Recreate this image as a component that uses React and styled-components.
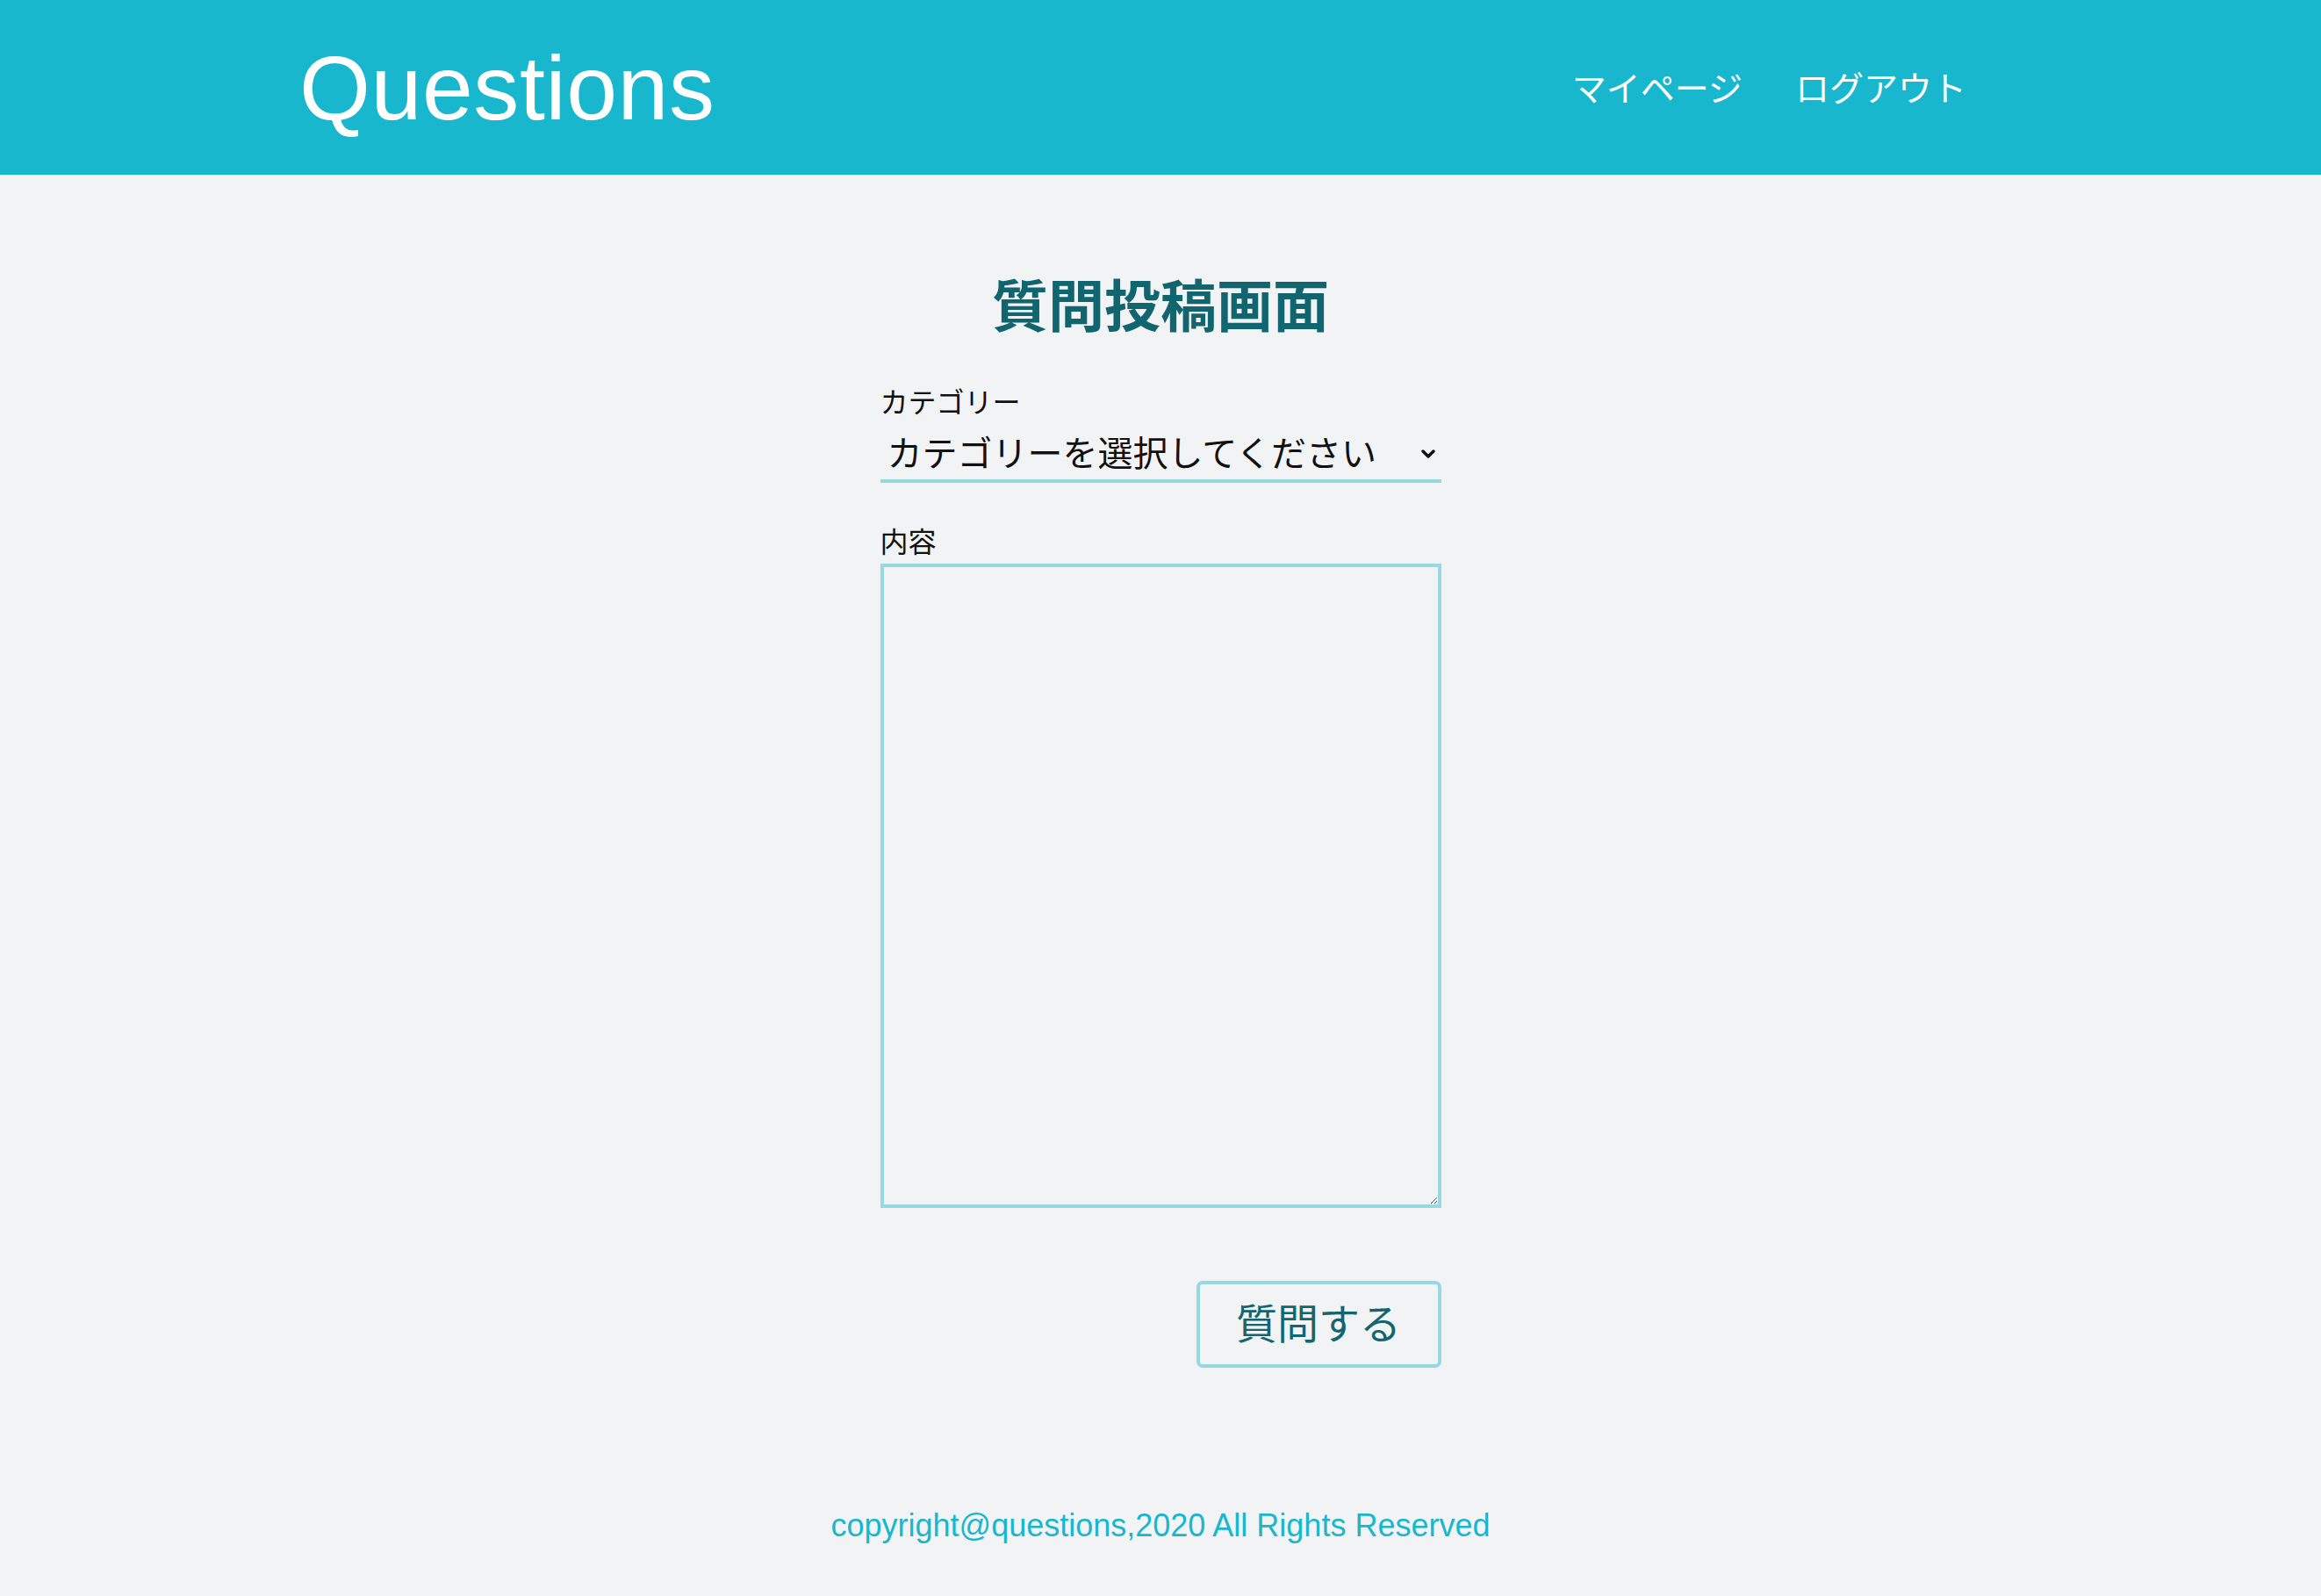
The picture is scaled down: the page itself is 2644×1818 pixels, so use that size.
import React from 'react';
import styled, { createGlobalStyle } from 'styled-components';

const GlobalStyle = createGlobalStyle`
  html, body {
    margin: 0;
    padding: 0;
    background: #f2f3f5;
  }
  body {
    font-family: "Noto Sans CJK JP", "Liberation Sans", sans-serif;
  }
`;

const Header = styled.header`
  height: 199px;
  background: #19b7ce;
  display: flex;
  align-items: center;
  justify-content: space-between;
  padding: 0 404px 0 341px;
  box-sizing: border-box;
`;

const Logo = styled.h1`
  margin: 0;
  font-family: "Liberation Sans", "Noto Sans", sans-serif;
  font-weight: 400;
  font-size: 104px;
  line-height: 1;
  color: #ffffff;
  letter-spacing: 0.6px;
`;

const Nav = styled.nav`
  display: flex;
  gap: 60px;
  margin-bottom: 3px;
`;

const NavLink = styled.a`
  font-family: "Noto Sans CJK JP", sans-serif;
  font-size: 39px;
  line-height: 1;
  color: #ffffff;
  text-decoration: none;
  cursor: pointer;
`;

const Main = styled.main`
  display: flex;
  flex-direction: column;
  align-items: center;
`;

const Title = styled.h2`
  margin: 113px 0 0;
  font-family: "Noto Sans CJK JP", sans-serif;
  font-weight: 700;
  font-size: 64px;
  line-height: 1;
  color: #10656f;
`;

const Form = styled.form`
  width: 639px;
  display: flex;
  flex-direction: column;
  margin-top: 64px;
`;

const Label = styled.label`
  font-family: "Noto Sans CJK JP", sans-serif;
  font-size: 32px;
  line-height: 1;
  color: #111;
  margin-top: ${p => p.$top || 0}px;
`;

const SelectWrap = styled.div`
  position: relative;
  margin-top: 4px;
`;

const Select = styled.select`
  appearance: none;
  width: 100%;
  height: 74px;
  border: none;
  border-bottom: 4px solid #98d8e2;
  background: transparent;
  padding: 6px 0 0 8px;
  font-family: "Noto Sans CJK JP", sans-serif;
  font-size: 40px;
  color: #111;
  outline: none;
`;

const Chevron = styled.svg`
  position: absolute;
  right: 6px;
  top: 35px;
  pointer-events: none;
`;

const TextArea = styled.textarea`
  margin-top: 11px;
  width: 100%;
  height: 734px;
  box-sizing: border-box;
  border: 4px solid #98d8e2;
  background: transparent;
  font-family: "Noto Sans CJK JP", sans-serif;
  font-size: 32px;
  outline: none;
`;

const ButtonRow = styled.div`
  display: flex;
  justify-content: flex-end;
  margin-top: 83px;
`;

const SubmitButton = styled.button`
  width: 279px;
  height: 99px;
  box-sizing: border-box;
  border: 4px solid #98d8e2;
  border-radius: 7px;
  background: transparent;
  font-family: "Noto Sans CJK JP", sans-serif;
  font-size: 47px;
  line-height: 1;
  color: #13666f;
  cursor: pointer;
  padding: 0 0 8px;
`;

const Footer = styled.footer`
  margin-top: 160px;
  padding-bottom: 61px;
  text-align: center;
  font-family: "Liberation Sans", "Noto Sans", sans-serif;
  font-size: 36px;
  line-height: 40px;
  color: #19b7ce;
`;

const App = () => {
  return (
    <>
      <GlobalStyle />
      <Header>
        <Logo>Questions</Logo>
        <Nav>
          <NavLink>マイページ</NavLink>
          <NavLink>ログアウト</NavLink>
        </Nav>
      </Header>
      <Main>
        <Title>質問投稿画面</Title>
        <Form onSubmit={e => e.preventDefault()}>
          <Label htmlFor="category">カテゴリー</Label>
          <SelectWrap>
            <Select id="category" defaultValue="">
              <option value="">カテゴリーを選択してください</option>
            </Select>
            <Chevron width="18" height="12" viewBox="0 0 18 12">
              <polyline points="3,3 9,9 15,3" fill="none" stroke="#111" strokeWidth="3.5" strokeLinecap="round" strokeLinejoin="round" />
            </Chevron>
          </SelectWrap>
          <Label htmlFor="body" $top={49}>内容</Label>
          <TextArea id="body" />
          <ButtonRow>
            <SubmitButton type="submit">質問する</SubmitButton>
          </ButtonRow>
        </Form>
        <Footer>copyright@questions,2020 All Rights Reserved</Footer>
      </Main>
    </>
  );
};

export default App;
